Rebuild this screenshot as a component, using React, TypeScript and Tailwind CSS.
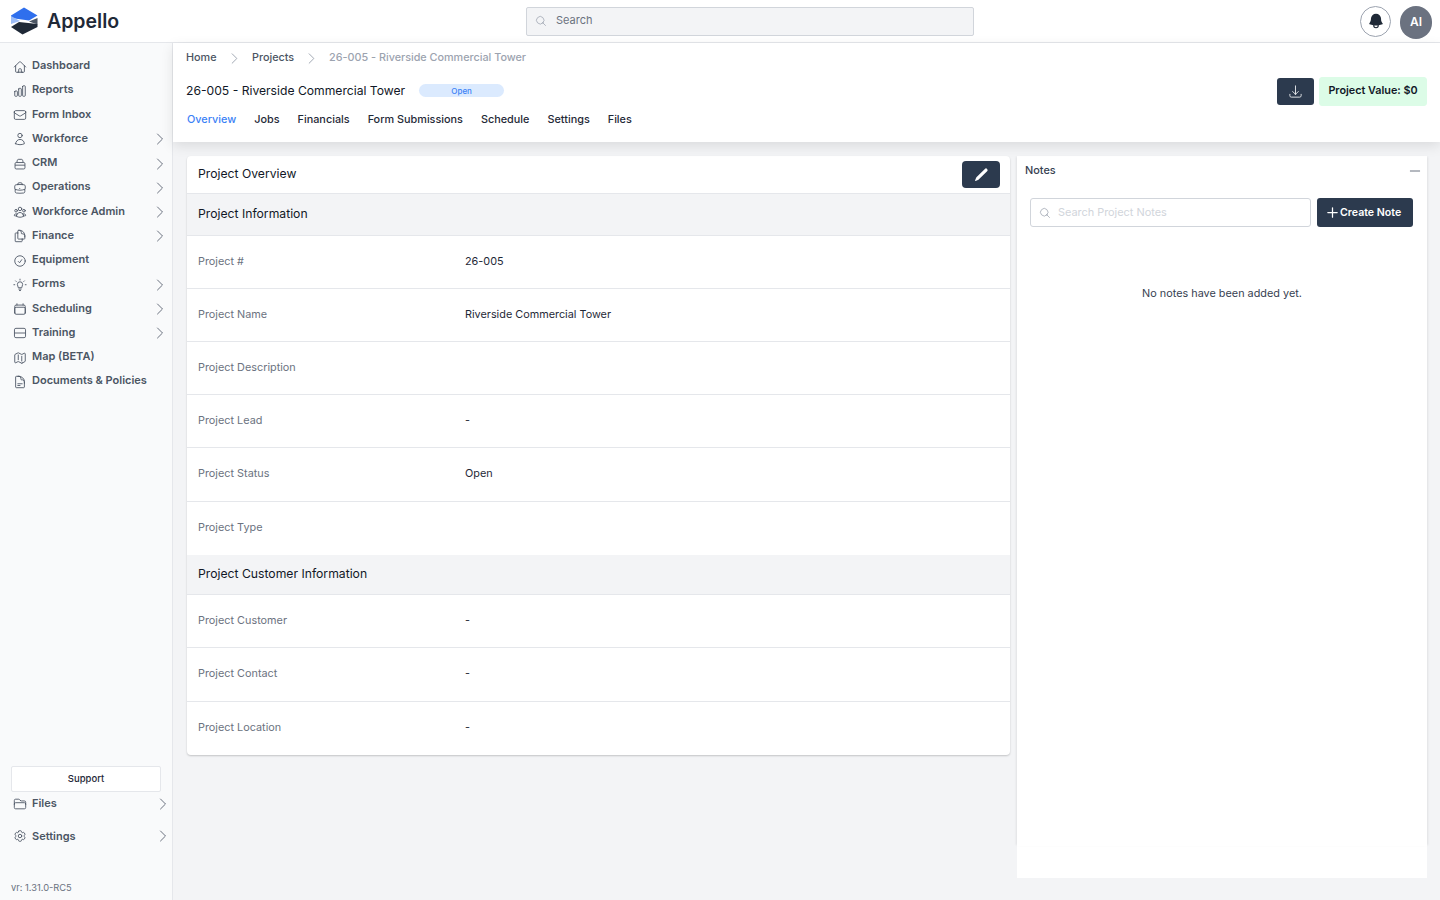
import React from 'react';
import {
  HiBell,
  HiMiniPencil,
  HiOutlineArrowDownTray,
  HiOutlineBriefcase,
  HiOutlineCalendar,
  HiOutlineChartBar,
  HiOutlineCheckCircle,
  HiOutlineChevronRight,
  HiOutlineCog6Tooth,
  HiOutlineDocumentDuplicate,
  HiOutlineDocumentText,
  HiOutlineEnvelope,
  HiOutlineFolder,
  HiOutlineHome,
  HiOutlineMagnifyingGlass,
  HiOutlineMap,
  HiOutlineMinus,
  HiOutlinePlus,
  HiOutlineUser,
  HiOutlineUserGroup
} from 'react-icons/hi2';

const CrmIcon = ({ className }: { className?: string }) => (
  <svg className={className} viewBox="0 0 24 24" fill="none" stroke="currentColor" strokeWidth="1.5">
    <path d="M6.5 9.5 L7.5 5.5 A2 2 0 0 1 9.5 4 H14.5 A2 2 0 0 1 16.5 5.5 L17.5 9.5" />
    <rect x="3.5" y="9.5" width="17" height="11" rx="2" />
    <path d="M3.5 14 H20.5" />
  </svg>
);

const FormsIcon = ({ className }: { className?: string }) => (
  <svg className={className} viewBox="0 0 24 24" fill="none" stroke="currentColor" strokeWidth="1.5" strokeLinecap="round">
    <path d="M9 16 C9 14 7.5 13.5 7.5 11 A4.5 4.5 0 0 1 16.5 11 C16.5 13.5 15 14 15 16 Z" />
    <path d="M10 19 H14 M11 21.5 H13 M12 2 V3.5 M4.5 5 L5.5 6 M19.5 5 L18.5 6 M1.5 11.5 H3 M21 11.5 H22.5" />
  </svg>
);

const TrainingIcon = ({ className }: { className?: string }) => (
  <svg className={className} viewBox="0 0 24 24" fill="none" stroke="currentColor" strokeWidth="1.5">
    <rect x="2.5" y="4" width="19" height="16" rx="2.5" />
    <path d="M2.5 12 H21.5" />
  </svg>
);

const navItems = [
  { label: 'Dashboard', icon: HiOutlineHome },
  { label: 'Reports', icon: HiOutlineChartBar },
  { label: 'Form Inbox', icon: HiOutlineEnvelope },
  { label: 'Workforce', icon: HiOutlineUser, more: true },
  { label: 'CRM', icon: CrmIcon, more: true },
  { label: 'Operations', icon: HiOutlineBriefcase, more: true },
  { label: 'Workforce Admin', icon: HiOutlineUserGroup, more: true },
  { label: 'Finance', icon: HiOutlineDocumentDuplicate, more: true },
  { label: 'Equipment', icon: HiOutlineCheckCircle },
  { label: 'Forms', icon: FormsIcon, more: true },
  { label: 'Scheduling', icon: HiOutlineCalendar, more: true },
  { label: 'Training', icon: TrainingIcon, more: true },
  { label: 'Map (BETA)', icon: HiOutlineMap },
  { label: 'Documents & Policies', icon: HiOutlineDocumentText }
];

const tabs = ['Jobs', 'Financials', 'Form Submissions', 'Schedule', 'Settings', 'Files'];

const infoRows = [
  { label: 'Project #', value: '26-005', h: 'h-[53px]' },
  { label: 'Project Name', value: 'Riverside Commercial Tower', h: 'h-[53px]' },
  { label: 'Project Description', value: '', h: 'h-[53px]' },
  { label: 'Project Lead', value: '-', h: 'h-[53px]' },
  { label: 'Project Status', value: 'Open', h: 'h-[54px]' },
  { label: 'Project Type', value: '', h: 'h-[53px]' }
];

const customerRows = [
  { label: 'Project Customer', value: '-', h: 'h-[53px]' },
  { label: 'Project Contact', value: '-', h: 'h-[54px]' },
  { label: 'Project Location', value: '-', h: 'h-[53px]' }
];

const Logo = () => (
  <svg width="28" height="28" viewBox="0 0 28 28">
    <path d="M14 0.5 L27.5 8.5 L19 13.5 L1 11 L1 8.5 Z" fill="#2f6fed" />
    <path d="M1 9 L10 14 L1 17 Z" fill="#9dbdf7" />
    <path d="M12.5 27.5 L1 20 L9 15 L27.5 17 L27.5 20 Z" fill="#1f2937" />
    <path d="M27.5 11 L27.5 17.5 L19 14.5 Z" fill="#4b5563" />
  </svg>
);

const NavRow = ({ item }: { item: any }) => (
  <div className="flex h-[24.25px] items-center pl-[13px] pr-[4px] text-[#4b5563]">
    <item.icon className="h-[14px] w-[14px] shrink-0 mt-[1px]" />
    <span className="ml-[5px] text-[11px] font-semibold leading-none -mt-[1px]">{item.label}</span>
    {item.more && <HiOutlineChevronRight className="ml-auto h-[16px] w-[16px] text-[#6b7280] mt-[1px]" />}
  </div>
);

const InfoRow = ({ row, last }: { row: any; last?: boolean }) => (
  <div className={`flex items-center px-[11px] pb-[2px] text-[10.85px] ${row.h} ${last ? '' : 'border-b border-[#e5e7eb]'}`}>
    <span className="w-[267px] text-[#6b7280]">{row.label}</span>
    <span className="text-[#1f2937]">{row.value}</span>
  </div>
);

const App = () => {
  return (
    <div className="flex h-[900px] w-[1440px] flex-col overflow-hidden bg-[#f3f4f6] font-['Inter',sans-serif]">
      <header className="flex h-[43px] shrink-0 items-center border-b border-[#e5e7eb] bg-white pl-[10px] pr-[8px]">
        <div className="flex w-[516px] items-center gap-[9px]">
          <Logo />
          <span className="mt-[2px] text-[19.5px] font-semibold leading-none text-[#1f2937]">Appello</span>
        </div>
        <div className="flex h-[29px] w-[448px] items-center rounded-[2px] border border-[#d1d5db] bg-[#f3f4f6] pl-[8px] text-[11px] text-[#6b7280]">
          <HiOutlineMagnifyingGlass className="h-[12px] w-[12px] text-[#9ca3af]" />
          <span className="ml-[9px] -mt-[2px]">Search</span>
        </div>
        <div className="ml-auto flex items-center gap-[9px]">
          <div className="flex h-[31px] w-[31px] items-center justify-center rounded-full border border-[#9ca3af] bg-white">
            <HiBell className="h-[18px] w-[18px] text-[#1f2937]" />
          </div>
          <div className="mt-[2px] flex h-[33px] w-[32px] items-center justify-center rounded-full bg-[#6b7280] text-[12px] font-semibold text-white">
            AI
          </div>
        </div>
      </header>

      <div className="flex min-h-0 flex-1">
        <aside className="flex w-[173px] shrink-0 flex-col border-r border-[#e5e7eb] bg-[#f9fafb]">
          <nav className="pt-[11px]">
            {navItems.map((item) => (
              <NavRow key={item.label} item={item} />
            ))}
          </nav>
          <div className="mt-auto">
            <div className="mx-[11px] flex h-[26px] items-center justify-center rounded-[2px] border border-[#e5e7eb] bg-white text-[9.5px] font-medium text-[#1f2937]">
              Support
            </div>
            <div className="flex h-[24px] items-center pl-[13px] pr-[1px] text-[#4b5563]">
              <HiOutlineFolder className="h-[14px] w-[14px]" />
              <span className="ml-[5px] -mt-[2px] text-[11px] font-semibold">Files</span>
              <HiOutlineChevronRight className="ml-auto h-[16px] w-[16px] text-[#6b7280]" />
            </div>
            <div className="mt-[8px] flex h-[24px] items-center pl-[13px] pr-[1px] text-[#4b5563]">
              <HiOutlineCog6Tooth className="h-[14px] w-[14px]" />
              <span className="ml-[5px] text-[11px] font-semibold">Settings</span>
              <HiOutlineChevronRight className="ml-auto h-[16px] w-[16px] text-[#6b7280]" />
            </div>
            <div className="mt-[34px] pb-[6px] pl-[11px] text-[9.3px] leading-[12px] text-[#6b7280]">vr: 1.31.0-RC5</div>
          </div>
        </aside>

        <main className="flex min-w-0 flex-1 flex-col">
          <div className="relative h-[99px] shrink-0 bg-white pl-[13px] pr-[13px] shadow-[0_4px_12px_rgba(0,0,0,0.1)]">
            <div className="flex h-[29px] items-center pt-[2px] text-[10.8px] font-medium text-[#4b5563]">
              <span>Home</span>
              <HiOutlineChevronRight className="mx-[10.25px] h-[15px] w-[15px] text-[#9ca3af]" />
              <span>Projects</span>
              <HiOutlineChevronRight className="mx-[10px] h-[15px] w-[15px] text-[#9ca3af]" />
              <span className="text-[#9ca3af]">26-005 - Riverside Commercial Tower</span>
            </div>
            <div className="mt-[5px] flex h-[28px] items-center">
              <span className="text-[12.15px] text-[#111827]">26-005 - Riverside Commercial Tower</span>
              <span className="ml-[14px] -mt-[1px] flex h-[13px] w-[85px] items-center justify-center rounded-full bg-[#dbeafe] text-[8px] font-medium text-[#3b82f6]">
                Open
              </span>
              <div className="ml-auto flex items-center gap-[5px]">
                <button className="flex h-[27px] w-[37px] items-center justify-center rounded-[3px] bg-[#2c3a4e] text-white">
                  <HiOutlineArrowDownTray className="h-[15px] w-[15px] text-[#e5e7eb]" />
                </button>
                <div className="flex h-[29px] w-[108px] items-center justify-center rounded-[3px] border border-[#dcfce7] bg-[#dcfce7] text-[10.8px] font-semibold text-[#111827]">
                  Project Value: $0
                </div>
              </div>
            </div>
            <div className="flex h-[29px] items-center gap-[18px] pl-[1px] text-[10.85px] font-medium text-[#1f2937]">
              <span className="text-[#3b82f6]">Overview</span>
              {tabs.map((t) => (
                <span key={t}>{t}</span>
              ))}
            </div>
          </div>

          <div className="flex min-h-0 flex-1 items-start pl-[14px] pt-[14px]">
            <section className="w-[823px] shrink-0 rounded-[4px] bg-white shadow-[0_1px_2px_rgba(0,0,0,0.2)]">
              <div className="flex h-[38px] items-center justify-between border-b border-[#e5e7eb] pl-[11px] pr-[10px]">
                <span className="text-[12.2px] text-[#111827]">Project Overview</span>
                <button className="flex h-[27px] w-[38px] items-center justify-center rounded-[4px] bg-[#2c3a4e] text-white">
                  <HiMiniPencil className="h-[15px] w-[15px]" />
                </button>
              </div>
              <div className="flex h-[42px] items-center border-b border-[#e5e7eb] bg-[#f3f4f6] px-[11px] text-[12.2px] text-[#111827]">
                Project Information
              </div>
              {infoRows.map((row, i) => (
                <InfoRow key={row.label} row={row} last={i === infoRows.length - 1} />
              ))}
              <div className="flex h-[40px] items-center border-b border-[#e5e7eb] bg-[#f3f4f6] px-[11px] text-[12.2px] text-[#111827]">
                Project Customer Information
              </div>
              {customerRows.map((row, i) => (
                <InfoRow key={row.label} row={row} last={i === customerRows.length - 1} />
              ))}
            </section>

            <section className="ml-[7px] h-[722px] w-[410px] shrink-0 bg-white">
              <div className="h-[690px] shadow-[-2px_0_2px_-1px_rgba(0,0,0,0.08),2px_0_2px_-1px_rgba(0,0,0,0.08)]">
                <div className="flex h-[29px] items-center justify-between pl-[8px] pr-[4px]">
                  <span className="text-[10.9px] font-medium text-[#374151]">Notes</span>
                  <HiOutlineMinus className="h-[16px] w-[16px] text-[#6b7280]" />
                </div>
                <div className="mt-[13px] flex items-center pl-[13px]">
                  <div className="flex h-[29px] w-[281px] items-center rounded-[3px] border border-[#d1d5db] bg-white pl-[8px] text-[10.9px] text-[#d1d5db]">
                    <HiOutlineMagnifyingGlass className="h-[12px] w-[12px] text-[#9ca3af]" />
                    <span className="ml-[7px]">Search Project Notes</span>
                  </div>
                  <button className="ml-[6px] flex h-[29px] w-[96px] items-center rounded-[3px] bg-[#2c3a4e] pl-[8px] text-[10.6px] font-semibold text-white">
                    <HiOutlinePlus className="h-[15px] w-[15px] stroke-2" />
                    <span className="pt-[1px]">Create Note</span>
                  </button>
                </div>
                <div className="mt-[58px] text-center text-[10.85px] text-[#374151]">No notes have been added yet.</div>
              </div>
            </section>
          </div>
        </main>
      </div>
    </div>
  );
};

export default App;
